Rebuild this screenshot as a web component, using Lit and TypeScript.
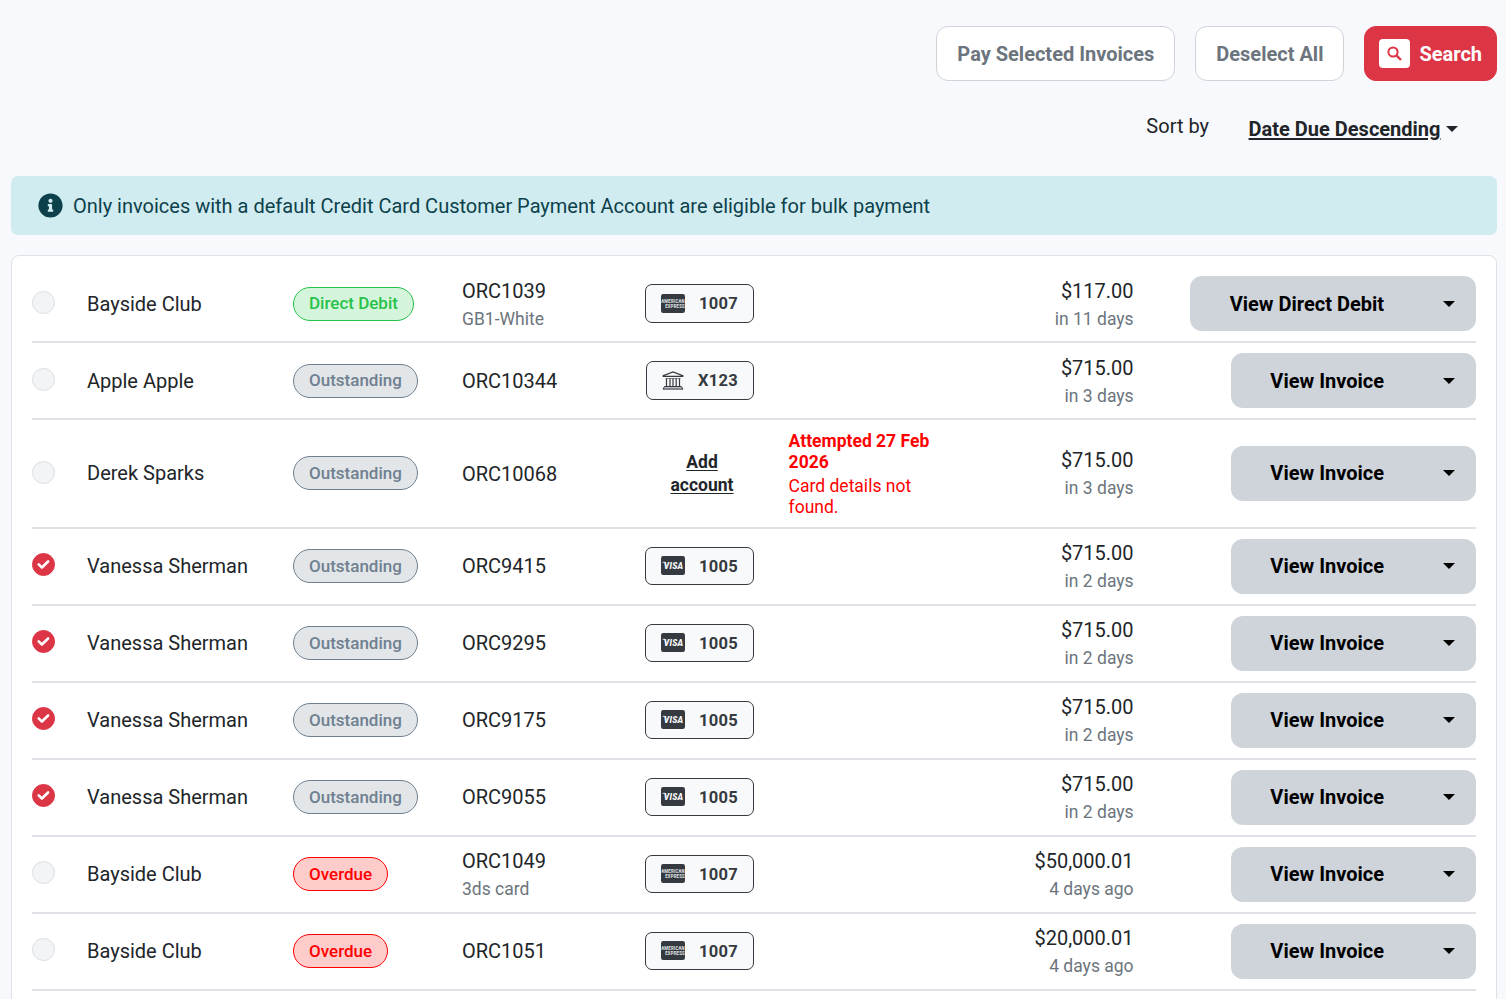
import { LitElement, html, css, nothing } from "lit";
import { customElement, property } from "lit/decorators.js";

type Account = "amex" | "visa" | "bank";

interface Invoice {
  name: string;
  status: "Direct Debit" | "Outstanding" | "Overdue";
  ref: string;
  note?: string;
  account?: Account;
  digits?: string;
  error?: [string, string];
  amount: string;
  due: string;
  checked?: boolean;
}

const vanessa = (ref: string): Invoice => ({
  name: "Vanessa Sherman",
  status: "Outstanding",
  ref,
  account: "visa",
  digits: "1005",
  amount: "$715.00",
  due: "in 2 days",
  checked: true,
});

const invoices: Invoice[] = [
  { name: "Bayside Club", status: "Direct Debit", ref: "ORC1039", note: "GB1-White", account: "amex", digits: "1007", amount: "$117.00", due: "in 11 days" },
  { name: "Apple Apple", status: "Outstanding", ref: "ORC10344", account: "bank", digits: "X123", amount: "$715.00", due: "in 3 days" },
  { name: "Derek Sparks", status: "Outstanding", ref: "ORC10068", error: ["Attempted 27 Feb 2026", "Card details not found."], amount: "$715.00", due: "in 3 days" },
  vanessa("ORC9415"),
  vanessa("ORC9295"),
  vanessa("ORC9175"),
  vanessa("ORC9055"),
  { name: "Bayside Club", status: "Overdue", ref: "ORC1049", note: "3ds card", account: "amex", digits: "1007", amount: "$50,000.01", due: "4 days ago" },
  { name: "Bayside Club", status: "Overdue", ref: "ORC1051", account: "amex", digits: "1007", amount: "$20,000.01", due: "4 days ago" },
];

const accountIcons = {
  visa: html`<svg class="icon" width="24" height="19" viewBox="0 0 24 19">
    <rect width="24" height="19" rx="2.2" fill="#343a40" />
    <path d="M1.5 6.3h2.6l1.3 3.4" fill="none" stroke="#f8f9fa" stroke-width=".8" />
    <text x="2.8" y="12.6" textLength="19.6" lengthAdjust="spacingAndGlyphs" font-family="Roboto, sans-serif" font-weight="900" font-style="italic" font-size="9.4" fill="#f8f9fa">VISA</text>
  </svg>`,
  amex: html`<svg class="icon" width="24" height="19" viewBox="0 0 24 19">
    <rect width="24" height="19" rx="2.2" fill="#343a40" />
    <text x="0.2" y="9" textLength="23.6" lengthAdjust="spacingAndGlyphs" font-family="Roboto, sans-serif" font-weight="700" font-size="6" fill="#e4e6e8">AMERICAN</text>
    <text x="4.2" y="13.8" textLength="19.6" lengthAdjust="spacingAndGlyphs" font-family="Roboto, sans-serif" font-weight="700" font-size="6" fill="#e4e6e8">EXPRESS</text>
  </svg>`,
  bank: html`<svg class="icon" width="22" height="19" viewBox="0 0 22 19" fill="none" stroke="#343a40">
    <path d="M1.2 5.4v-.8L11 1l9.8 3.6v.8z" stroke-width="1.2" />
    <path d="M3.5 7.5h15" stroke-width=".6" />
    <path d="M4.5 7.5v7.5M8 7.5v7.5M11 7.5v7.5M14.2 7.5v7.5M17.5 7.5v7.5" stroke-width="1.2" />
    <path d="M2.6 15.5h16.8l1.6 2.6H1z" stroke-width="1" fill="#b9bdc1" />
  </svg>`,
};

@customElement("invoice-row")
class InvoiceRow extends LitElement {
  @property({ attribute: false }) invoice!: Invoice;

  static styles = css`
    :host {
      display: grid;
      grid-template-columns: 55px 206px 169px 180px 112px 34.6px 160px 185px 1fr;
      align-items: center;
      min-height: 75px;
      border-bottom: 2px solid #dee2e6;
    }
    .check {
      display: block;
      box-sizing: border-box;
      width: 23px;
      height: 23px;
      margin-bottom: 2.6px;
      border-radius: 50%;
      background: #f3f4f6;
      border: 1px solid #dbdfe3;
    }
    .check.on {
      background: #dc3545;
      border-color: #dc3545;
    }
    .check svg { display: block; }
    .pill {
      display: inline-flex;
      align-items: center;
      box-sizing: border-box;
      height: 34px;
      padding: 0 15px 1px;
      border: 1px solid;
      border-radius: 17px;
      font-size: 17px;
      font-weight: 500;
    }
    .direct { color: #28c14b; background: #d4f5db; }
    .outstanding { color: #708090; background: #e2e6e9; }
    .overdue { color: #f00; background: #fcc; }
    .sub {
      font-size: 17.5px;
      line-height: 26.25px;
      color: #6c757d;
    }
    .main { line-height: 30px; }
    .ref { padding-top: 0.5px; }
    .payment { display: flex; justify-content: flex-end; }
    .account {
      display: flex;
      align-items: center;
      justify-content: space-between;
      box-sizing: border-box;
      width: 109px;
      height: 38.5px;
      padding: 0 15px;
      border: 1px solid #343a40;
      border-radius: 7px;
      background: #f8f9fa;
      color: #343a40;
      font-size: 16.5px;
      font-weight: 700;
      letter-spacing: 0.3px;
    }
    .account.bank { width: 108px; }
    .account span { padding-top: 1.5px; }
    .icon { overflow: visible; margin-bottom: 0.7px; }
    .add {
      width: 70px;
      margin-right: 17px;
      padding-top: 1.6px;
      text-align: center;
      font-size: 17.5px;
      line-height: 23px;
      font-weight: 700;
      text-decoration: underline;
      text-underline-offset: 2px;
    }
    .error {
      grid-column: 7;
      padding: 10.8px 0 8.8px;
      color: #f00;
      font-size: 17.5px;
      line-height: 21px;
    }
    .error strong { display: block; margin-bottom: 3px; }
    .amount { grid-column: 8; padding-top: 0.5px; text-align: right; }
    .action {
      justify-self: end;
      display: flex;
      align-items: center;
      height: 55px;
      padding: 0 21px 0 39.5px;
      gap: 59px;
      border-radius: 12px;
      background: #ced4da;
      color: #000;
      font-weight: 700;
    }
    .caret {
      border-top: 6px solid;
      border-left: 6px solid transparent;
      border-right: 6px solid transparent;
    }
  `;

  render() {
    const i = this.invoice;
    const tone = { "Direct Debit": "direct", Outstanding: "outstanding", Overdue: "overdue" }[i.status];
    return html`
      <span class="check ${i.checked ? "on" : ""}">
        ${i.checked
          ? html`<svg width="21" height="21" viewBox="0 0 21 21"><path d="M5.7 10.4l3.2 3.1 6.2-6" fill="none" stroke="#fff" stroke-width="2.6" stroke-linecap="round" stroke-linejoin="round" /></svg>`
          : nothing}
      </span>
      <span>${i.name}</span>
      <span><span class="pill ${tone}">${i.status}</span></span>
      <div class="ref">
        <div class="main">${i.ref}</div>
        ${i.note ? html`<div class="sub">${i.note}</div>` : nothing}
      </div>
      <div class="payment">
        ${i.account
          ? html`<div class="account ${i.account}">${accountIcons[i.account]}<span>${i.digits}</span></div>`
          : html`<div class="add">Add account</div>`}
      </div>
      ${i.error ? html`<div class="error"><strong>${i.error[0]}</strong>${i.error[1]}</div>` : nothing}
      <div class="amount"><div class="main">${i.amount}</div><div class="sub">${i.due}</div></div>
      <div class="action"><span>View ${i.status === "Direct Debit" ? "Direct Debit" : "Invoice"}</span><i class="caret"></i></div>
    `;
  }
}

@customElement("app-root")
class AppRoot extends LitElement {
  static styles = css`
    :host {
      display: flex;
      flex-direction: column;
      box-sizing: border-box;
      height: 999px;
      overflow: hidden;
      padding: 26px 9px 0 11px;
      background: #f8f9fc;
      color: #212529;
      font: 20px/30px Roboto, sans-serif;
    }
    .toolbar {
      display: flex;
      flex: none;
      justify-content: flex-end;
      gap: 20px;
    }
    .button {
      display: flex;
      align-items: center;
      box-sizing: border-box;
      height: 55px;
      padding: 0 19.6px 0 20.4px;
      border: 1px solid #ced4da;
      border-radius: 12px;
      background: #fff;
      color: #6c757d;
      font-weight: 700;
    }
    .search {
      gap: 9.4px;
      padding: 0 14px;
      border-color: #dc3545;
      background: #dc3545;
      color: #fff;
    }
    .glass {
      display: flex;
      align-items: center;
      justify-content: center;
      width: 31px;
      height: 29px;
      border-radius: 4px;
      background: #fff;
    }
    .sort {
      display: flex;
      flex: none;
      box-sizing: border-box;
      justify-content: flex-end;
      gap: 39.6px;
      padding: 30px 39px 0 0;
      height: 95px;
    }
    .order {
      display: flex;
      align-items: center;
      gap: 5.5px;
      height: 30px;
      margin-top: 3px;
      font-weight: 700;
    }
    .order u { text-underline-offset: 2px; }
    .caret {
      border-top: 6px solid;
      border-left: 6px solid transparent;
      border-right: 6px solid transparent;
    }
    .notice {
      display: flex;
      align-items: center;
      flex: none;
      gap: 10px;
      height: 59px;
      padding: 0 27px;
      border-radius: 7px;
      background: #d1ecf1;
      color: #0c414b;
      box-sizing: border-box;
    }
    .list {
      flex: none;
      margin-top: 20px;
      padding: 10px 20px 20px;
      border: 1px solid #dee2e6;
      border-radius: 8px;
      background: #fff;
    }
  `;

  render() {
    return html`
      <div class="toolbar">
        <div class="button">Pay Selected Invoices</div>
        <div class="button">Deselect All</div>
        <div class="button search">
          <span class="glass"><svg width="15" height="15" viewBox="0 0 15 15" fill="none" stroke="#dc3545"><circle cx="6" cy="6" r="4.6" stroke-width="2" /><path d="M9.4 9.4l4.6 4.6" stroke-width="2.4" /></svg></span>
          Search
        </div>
      </div>
      <div class="sort">
        <span>Sort by</span>
        <span class="order"><u>Date Due Descending</u><i class="caret"></i></span>
      </div>
      <div class="notice">
        <svg width="25" height="25" viewBox="0 0 512 512" fill="#0c414b">
          <path d="M256 8C119.043 8 8 119.083 8 256c0 136.997 111.043 248 248 248s248-111.003 248-248C504 119.083 392.957 8 256 8zm0 110c23.196 0 42 18.804 42 42s-18.804 42-42 42-42-18.804-42-42 18.804-42 42-42zm56 254c0 6.627-5.373 12-12 12h-88c-6.627 0-12-5.373-12-12v-24c0-6.627 5.373-12 12-12h12v-64h-12c-6.627 0-12-5.373-12-12v-24c0-6.627 5.373-12 12-12h64c6.627 0 12 5.373 12 12v100h12c6.627 0 12 5.373 12 12v24z" />
        </svg>
        <span>Only invoices with a default Credit Card Customer Payment Account are eligible for bulk payment</span>
      </div>
      <div class="list">${invoices.map((i) => html`<invoice-row .invoice=${i}></invoice-row>`)}</div>
    `;
  }
}
